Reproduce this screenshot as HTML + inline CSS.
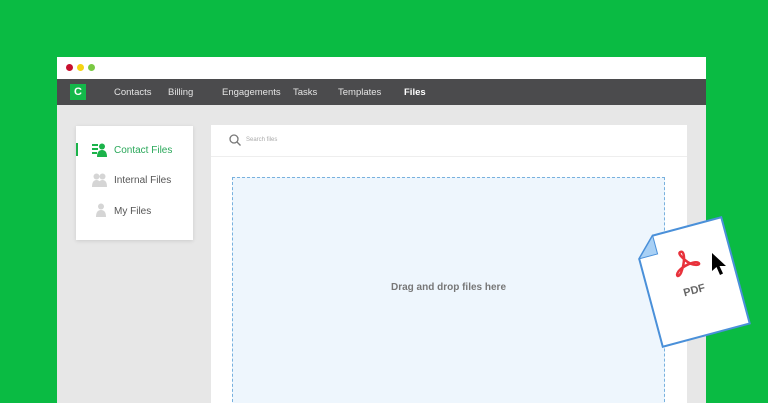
<!DOCTYPE html>
<html><head><style>
*{margin:0;padding:0;box-sizing:border-box}
html,body{width:768px;height:403px;overflow:hidden}
body{background:#0abb43;font-family:"Liberation Sans",sans-serif;position:relative}
.win{position:absolute;left:57px;top:57px;width:649px;height:346px;background:#e7e7e7;overflow:hidden}
.tb{height:22px;background:#fff;position:relative}
.dot{position:absolute;top:7px;width:7px;height:7px;border-radius:50%}
.nav{height:26px;background:#4b4b4d;position:relative;color:#e4e4e4;font-size:9.5px}
.nav span{position:absolute;top:8px}
.logo{position:absolute;left:13px;top:5px;width:16px;height:16px;background:#14b84a;color:#fff;font-weight:bold;font-size:11px;text-align:center;line-height:16px}
.side{position:absolute;left:19px;top:69px;width:117px;height:114px;background:#fff;box-shadow:0 1px 4px rgba(0,0,0,.12)}
.side div{position:absolute;left:38px;font-size:10px;color:#555}
.main{position:absolute;left:154px;top:68px;width:476px;height:278px;background:#fff}
.drop{position:absolute;left:21px;top:52px;width:433px;height:230px;background:#eef6fd;border:1px dashed #78b1de}
</style></head><body>
<div class="win">
<div class="tb"><div class="dot" style="left:9px;background:#c8102e"></div><div class="dot" style="left:20px;background:#f5d312"></div><div class="dot" style="left:31px;background:#7ac943"></div></div>
<div class="nav"><div class="logo">C</div>
<span style="left:57px">Contacts</span><span style="left:111px">Billing</span><span style="left:165px">Engagements</span><span style="left:236px">Tasks</span><span style="left:281px">Templates</span><span style="left:347px;font-weight:bold;color:#fff">Files</span></div>
<div class="side">
<div style="position:absolute;left:0;top:17px;width:2px;height:13px;background:#1bb34a"></div>
<svg style="position:absolute;left:16px;top:17px" width="15" height="14"><rect x="0" y="1" width="6" height="2" fill="#1bb34a"/><rect x="0" y="5" width="6" height="2" fill="#1bb34a"/><rect x="0" y="9" width="5" height="2" fill="#1bb34a"/><circle cx="10" cy="3.5" r="3" fill="#1bb34a"/><path d="M5 14 Q5 7 10 7 Q15 7 15 14Z" fill="#1bb34a"/></svg>
<div style="top:19px;color:#2aa85a">Contact Files</div>
<svg style="position:absolute;left:16px;top:47px" width="15" height="14" fill="#d5d5d5"><circle cx="4.5" cy="3.5" r="3"/><circle cx="10.5" cy="3.5" r="3"/><path d="M0 14Q0 7 4.5 7Q9 7 9 14Z"/><path d="M6 14Q6 7 10.5 7Q15 7 15 14Z"/></svg>
<div style="top:49px">Internal Files</div>
<svg style="position:absolute;left:20px;top:77px" width="10" height="14" fill="#d5d5d5"><circle cx="5" cy="3.5" r="3"/><path d="M0 14Q0 7 5 7Q10 7 10 14Z"/></svg>
<div style="top:80px">My Files</div>
</div>
<div class="main">
<svg style="position:absolute;left:18px;top:9px" width="12" height="12" fill="none" stroke="#777" stroke-width="1.3"><circle cx="5" cy="5" r="4"/><path d="M8 8l3.5 3.5"/></svg>
<div style="position:absolute;left:35px;top:12px;font-size:6px;color:#aaa">Search files</div>
<div style="position:absolute;left:0;top:31px;width:476px;height:1px;background:#eee"></div>
<div class="drop"><div style="position:absolute;top:104px;width:100%;text-align:center;font-size:10px;font-weight:bold;color:#777">Drag and drop files here</div></div>
</div>
</div>
<svg style="position:absolute;left:646px;top:226px;transform:rotate(-15deg);overflow:visible" width="92" height="112">
<path d="M20 1H91V111H1V20Z" fill="#fff" stroke="#4a90d9" stroke-width="2"/>
<path d="M1 20L20 1V20Z" fill="#a8d0f5" stroke="#4a90d9" stroke-width="1"/>
</svg>
<div style="position:absolute;left:647px;top:227px;width:90px;height:110px;transform:rotate(-15deg)">
<svg style="position:absolute;left:30px;top:20px" width="30" height="30" fill="none" stroke="#e8323c" stroke-width="2.5"><path d="M12 3c4 0 2 10-5 20c-4 5-7 2-2-2c6-4 18-6 21-3c3 3-6 3-12-6c-4-6-5-9-2-9z"/></svg>
<div style="position:absolute;top:58px;width:100%;text-align:center;font-size:11px;color:#666;font-weight:bold">PDF</div>
</div>
<svg style="position:absolute;left:710px;top:252px" width="18" height="26"><path d="M2 1L2 19L6.5 15L10 23L13 21.5L9.5 14L16 14Z" fill="#000"/></svg>
</body></html>
